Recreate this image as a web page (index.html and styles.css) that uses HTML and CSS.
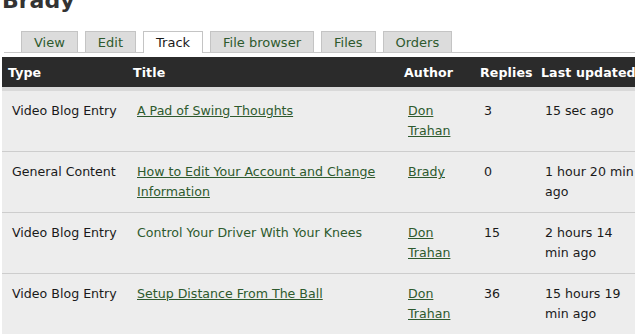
FILE: index.html
```html
<!DOCTYPE html>
<html>
<head>
<meta charset="utf-8">
<link rel="stylesheet" href="styles.css">
</head>
<body>
<div class="page">
  <h1 class="title">Brady</h1>
  <ul class="tabs">
    <li class="tab"><a href="#">View</a></li>
    <li class="tab"><a href="#">Edit</a></li>
    <li class="tab active"><a href="#">Track</a></li>
    <li class="tab"><a href="#">File browser</a></li>
    <li class="tab"><a href="#">Files</a></li>
    <li class="tab"><a href="#">Orders</a></li>
  </ul>
  <table class="track">
    <colgroup>
      <col class="c-type"><col class="c-title"><col class="c-author"><col class="c-replies"><col class="c-updated">
    </colgroup>
    <thead>
      <tr><th>Type</th><th>Title</th><th>Author</th><th>Replies</th><th>Last updated</th></tr>
    </thead>
    <tbody>
      <tr>
        <td>Video Blog Entry</td>
        <td><a class="ul" href="#">A Pad of Swing Thoughts</a></td>
        <td><a class="ul" href="#">Don Trahan</a></td>
        <td>3</td>
        <td>15 sec ago</td>
      </tr>
      <tr>
        <td>General Content</td>
        <td><a class="ul" href="#">How to Edit Your Account and Change Information</a></td>
        <td><a class="ul" href="#">Brady</a></td>
        <td>0</td>
        <td>1 hour 20 min ago</td>
      </tr>
      <tr>
        <td>Video Blog Entry</td>
        <td><a href="#">Control Your Driver With Your Knees</a></td>
        <td><a class="ul" href="#">Don Trahan</a></td>
        <td>15</td>
        <td>2 hours 14<br>min ago</td>
      </tr>
      <tr>
        <td>Video Blog Entry</td>
        <td><a class="ul" href="#">Setup Distance From The Ball</a></td>
        <td><a class="ul" href="#">Don Trahan</a></td>
        <td>36</td>
        <td>15 hours 19<br>min ago</td>
      </tr>
    </tbody>
  </table>
</div>
</body>
</html>
```
FILE: styles.css
```css
html, body {
  margin: 0;
  padding: 0;
  background: #fff;
  overflow: hidden;
}
body {
  font-family: "DejaVu Sans", "Lucida Grande", sans-serif;
  font-size: 12.6px;
  color: #1a1a1a;
}
.page {
  width: 700px;
  padding-left: 2px;
}
.title {
  margin: -12px 0 0 0;
  font-size: 22px;
  line-height: 26px;
  font-weight: bold;
  color: #333;
}
.tabs {
  list-style: none;
  margin: 17px 0 0 2px;
  padding: 0 0 0 17px;
  display: flex;
  gap: 7px;
  border-bottom: 1px solid #c8c8c8;
  height: 21px;
}
.tab {
  display: flex;
  height: 20px;
  border: 1px solid #c4c4c4;
  border-bottom: none;
  background: #dcdcdc;
}
.tab a {
  display: block;
  padding: 0 12px;
  line-height: 21px;
  font-size: 13px;
  color: #2e5a2e;
  text-decoration: none;
}
.tab.active {
  background: #fff;
  height: 21px;
}
.tab.active a {
  color: #1a1a1a;
}
.track {
  margin-top: 4px;
  border-collapse: collapse;
  table-layout: fixed;
  width: 650px;
}
.c-type { width: 125px; }
.c-title { width: 271px; }
.c-author { width: 76px; }
.c-replies { width: 61px; }
.c-updated { width: 117px; }
.track thead th {
  background: #2b2b2b;
  color: #fff;
  font-weight: bold;
  font-size: 12.6px;
  text-align: left;
  white-space: nowrap;
  height: 30px;
  padding: 0 6px;
  border-bottom: 4px solid #d9d9d9;
  letter-spacing: 0.1px;
}
.track tbody td {
  background: #ededed;
  vertical-align: top;
  padding: 10px 10px 10px 10px;
  line-height: 20px;
  border-top: 1px solid #fff;
  border-bottom: 1px solid #cdcdcd;
}
.track a {
  color: #2e5a2e;
  text-decoration: none;
}
.track a.ul {
  text-decoration: underline;
}
```
